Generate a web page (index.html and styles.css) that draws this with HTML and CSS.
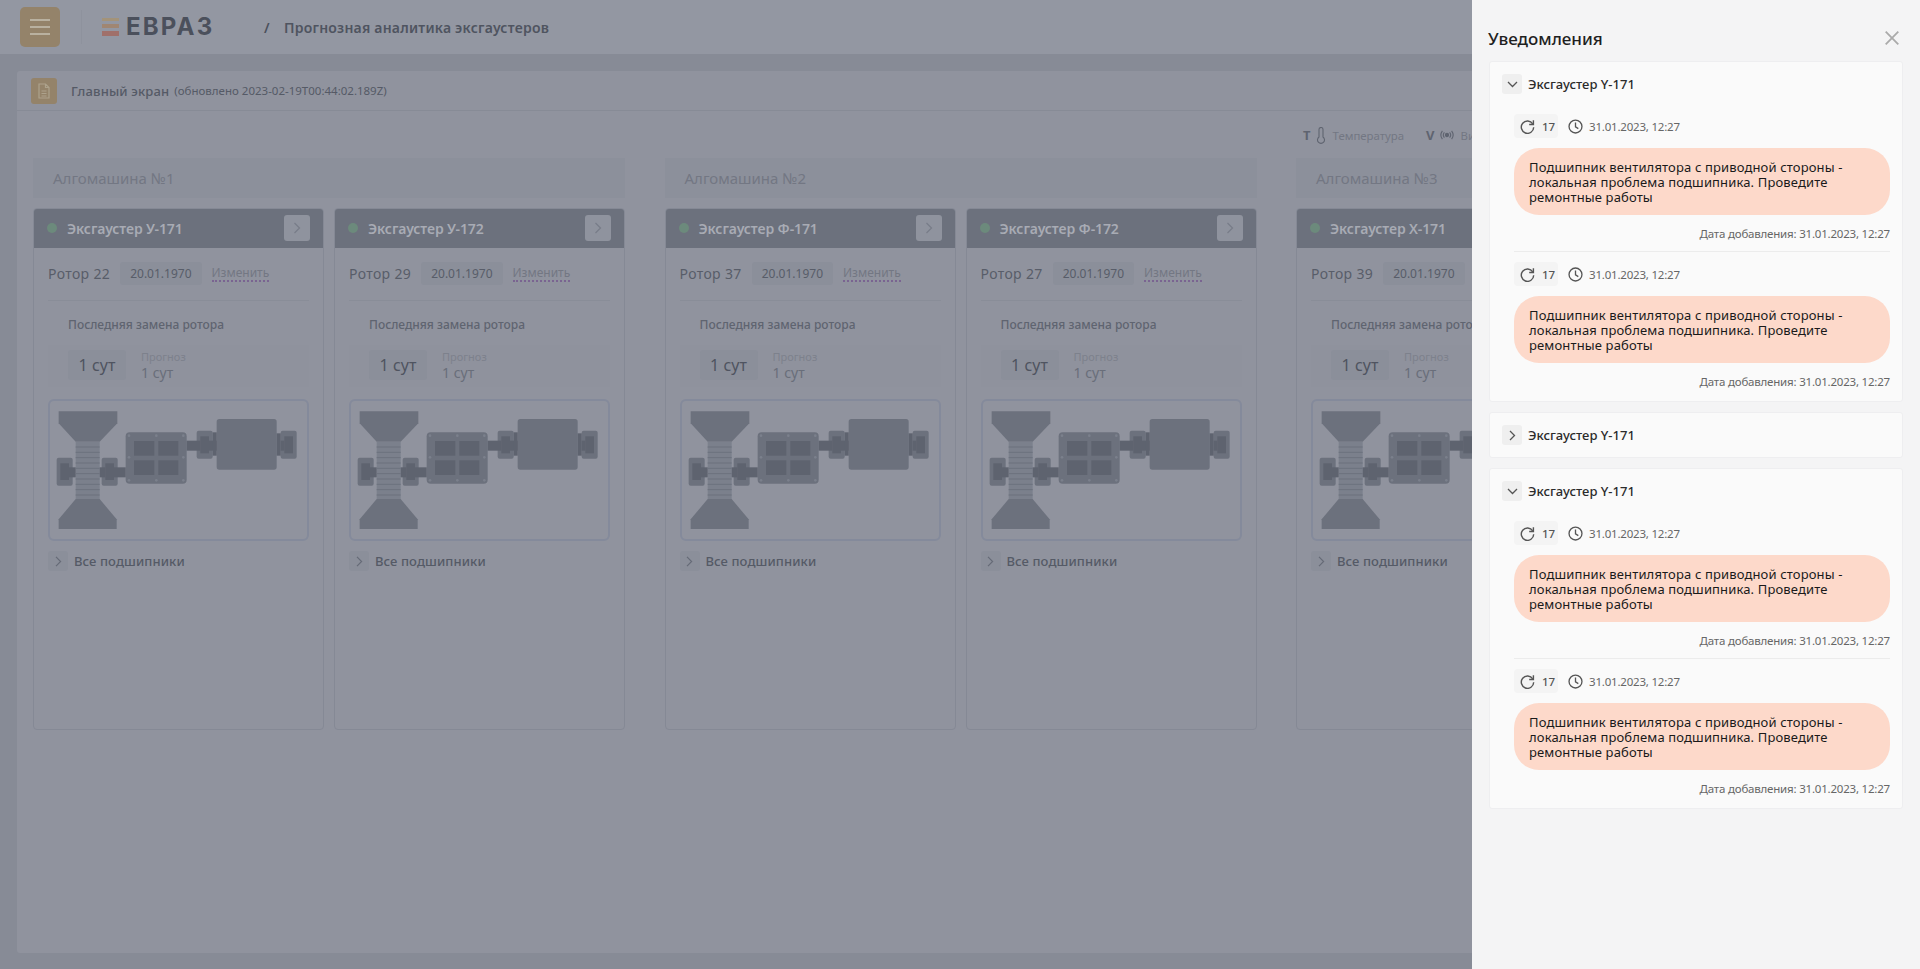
FILE: index.html
```html
<!DOCTYPE html>
<html lang="en">
<head>
    <meta charset="UTF-8">
    <title>Прогнозная аналитика эксгаустеров</title>
    <link rel="stylesheet" href="styles.css">
</head>
<body>
    <svg class="defs" width="0" height="0">
        <symbol id="scheme" viewBox="31 33 771 414">
            <g fill="#6c717d">
                <polygon points="57,64 233,64 233,100 180,155 108,155 57,100"/>
                <polygon points="108,327 180,327 231,388 231,417 57,417 57,388"/>
                <rect x="108" y="155" width="72" height="172" fill="#7b808c"/>
                <rect x="51" y="203" width="48" height="84" rx="6"/>
                <rect x="186" y="203" width="48" height="84" rx="6"/>
                <rect x="258" y="127" width="183" height="154" rx="12"/>
                <rect x="471" y="122" width="48" height="84" rx="6"/>
                <rect x="723" y="122" width="48" height="84" rx="6"/>
                <rect x="531" y="87" width="180" height="152" rx="8"/>
            </g>
            <g fill="#5e636f">
                <rect x="88" y="232" width="20" height="30"/>
                <rect x="180" y="232" width="17" height="30"/>
                <rect x="223" y="232" width="35" height="30"/>
                <rect x="441" y="152" width="41" height="30"/>
                <rect x="508" y="152" width="23" height="30"/>
                <rect x="519" y="127" width="12" height="70"/>
                <rect x="711" y="130" width="12" height="67"/>
                <rect x="723" y="152" width="11" height="30"/>
                <rect x="62" y="220" width="26" height="50"/>
                <rect x="197" y="220" width="26" height="50"/>
                <rect x="482" y="139" width="26" height="51"/>
                <rect x="734" y="139" width="26" height="51"/>
                <rect x="283" y="153" width="61" height="44"/>
                <rect x="356" y="153" width="60" height="44"/>
                <rect x="283" y="211" width="61" height="44"/>
                <rect x="356" y="211" width="60" height="44"/>
            </g>
            <g stroke="#6c717d" stroke-width="3">
                <path d="M108 171h72M108 187h72M108 203h72M108 219h72M108 235h72M108 251h72M108 267h72M108 283h72M108 299h72M108 315h72"/>
            </g>
            <g fill="#7b808c">
                <circle cx="268" cy="137" r="4"/><circle cx="350" cy="137" r="4"/><circle cx="431" cy="137" r="4"/>
                <circle cx="268" cy="202" r="4"/><circle cx="431" cy="202" r="4"/>
                <circle cx="268" cy="271" r="4"/><circle cx="350" cy="271" r="4"/><circle cx="431" cy="271" r="4"/>
            </g>
        </symbol>
        <symbol id="redo" viewBox="0 0 16 16">
            <path d="M13.6 5.2A6.6 6.6 0 1 0 14.6 8.8" fill="none" stroke="currentColor" stroke-width="1.5"/>
            <path d="M14.3 1.4v4.5H9.8" fill="none" stroke="currentColor" stroke-width="1.5"/>
        </symbol>
        <symbol id="clock" viewBox="0 0 16 16">
            <circle cx="8" cy="8" r="6.9" fill="none" stroke="currentColor" stroke-width="1.4"/>
            <path d="M8 3.8V8.4L11 10.2" fill="none" stroke="currentColor" stroke-width="1.4"/>
        </symbol>
    </svg>

    <header class="topbar">
        <button class="menu-btn"><span></span><span></span><span></span></button>
        <div class="topbar-sep"></div>
        <div class="logo">
            <div class="logo-mark"><i></i><i></i><i></i></div>
            <span class="logo-text">ЕВРАЗ</span>
        </div>
        <span class="crumb-slash">/</span>
        <span class="crumb">Прогнозная аналитика эксгаустеров</span>
    </header>

    <main class="main">
        <section class="board">
            <div class="board-head">
                <div class="board-icon">
                    <svg width="14" height="16" viewBox="0 0 14 16" fill="none" stroke="#ada28c" stroke-width="1.2"><path d="M2 1h6.5L12 4.5V15H2zM8.5 1v3.5H12M4.5 8h5M4.5 10.5h5M4.5 13h5"/></svg>
                </div>
                <span class="board-title">Главный экран</span>
                <span class="board-note">(обновлено 2023-02-19T00:44:02.189Z)</span>
            </div>

            <div class="legend">
                <div class="legend-item">
                    <b>T</b>
                    <svg width="10" height="17" viewBox="0 0 10 17" fill="none" stroke="#5f6470" stroke-width="1.1"><path d="M3 10V2.5a2 2 0 0 1 4 0V10a3.5 3.5 0 1 1-4 0z"/></svg>
                    <span>Температура</span>
                </div>
                <div class="legend-item">
                    <b>V</b>
                    <svg width="14" height="12" viewBox="0 0 14 12" fill="none" stroke="#5f6470" stroke-width="1.1"><circle cx="7" cy="6" r="1.6" fill="#5f6470"/><path d="M4.4 3.4a4 4 0 0 0 0 5.2M9.6 3.4a4 4 0 0 1 0 5.2M2.4 1.8a7 7 0 0 0 0 8.4M11.6 1.8a7 7 0 0 1 0 8.4"/></svg>
                    <span>Вибрация</span>
                </div>
            </div>

            <div class="groups">
                <div class="group">
                    <div class="group-title">Алгомашина №1</div>
                    <div class="group-cards">
                        <article class="unit">
                            <div class="unit-head"><i class="dot"></i><span class="unit-name">Эксгаустер У-171</span><button class="unit-btn"><svg width="8" height="12" viewBox="0 0 8 12" fill="none" stroke="#787c88" stroke-width="1.2"><path d="M1.5 1l5 5-5 5"/></svg></button></div>
                            <div class="unit-body">
                                <div class="rotor"><span class="rotor-name">Ротор 22</span><span class="rotor-date">20.01.1970</span><span class="rotor-edit">Изменить</span></div>
                                <div class="last-title">Последняя замена ротора</div>
                                <div class="last-row"><span class="last-value">1 сут</span><div class="forecast"><small>Прогноз</small><span>1 сут</span></div></div>
                                <div class="scheme"><svg><use href="#scheme"/></svg></div>
                                <div class="bearings"><button class="small-btn"><svg width="7" height="11" viewBox="0 0 7 11" fill="none" stroke="#666b77" stroke-width="1.2"><path d="M1 .8l4.6 4.7L1 10.2"/></svg></button><span>Все подшипники</span></div>
                            </div>
                        </article>
                        <article class="unit">
                            <div class="unit-head"><i class="dot"></i><span class="unit-name">Эксгаустер У-172</span><button class="unit-btn"><svg width="8" height="12" viewBox="0 0 8 12" fill="none" stroke="#787c88" stroke-width="1.2"><path d="M1.5 1l5 5-5 5"/></svg></button></div>
                            <div class="unit-body">
                                <div class="rotor"><span class="rotor-name">Ротор 29</span><span class="rotor-date">20.01.1970</span><span class="rotor-edit">Изменить</span></div>
                                <div class="last-title">Последняя замена ротора</div>
                                <div class="last-row"><span class="last-value">1 сут</span><div class="forecast"><small>Прогноз</small><span>1 сут</span></div></div>
                                <div class="scheme"><svg><use href="#scheme"/></svg></div>
                                <div class="bearings"><button class="small-btn"><svg width="7" height="11" viewBox="0 0 7 11" fill="none" stroke="#666b77" stroke-width="1.2"><path d="M1 .8l4.6 4.7L1 10.2"/></svg></button><span>Все подшипники</span></div>
                            </div>
                        </article>
                    </div>
                </div>

                <div class="group">
                    <div class="group-title">Алгомашина №2</div>
                    <div class="group-cards">
                        <article class="unit">
                            <div class="unit-head"><i class="dot"></i><span class="unit-name">Эксгаустер Ф-171</span><button class="unit-btn"><svg width="8" height="12" viewBox="0 0 8 12" fill="none" stroke="#787c88" stroke-width="1.2"><path d="M1.5 1l5 5-5 5"/></svg></button></div>
                            <div class="unit-body">
                                <div class="rotor"><span class="rotor-name">Ротор 37</span><span class="rotor-date">20.01.1970</span><span class="rotor-edit">Изменить</span></div>
                                <div class="last-title">Последняя замена ротора</div>
                                <div class="last-row"><span class="last-value">1 сут</span><div class="forecast"><small>Прогноз</small><span>1 сут</span></div></div>
                                <div class="scheme"><svg><use href="#scheme"/></svg></div>
                                <div class="bearings"><button class="small-btn"><svg width="7" height="11" viewBox="0 0 7 11" fill="none" stroke="#666b77" stroke-width="1.2"><path d="M1 .8l4.6 4.7L1 10.2"/></svg></button><span>Все подшипники</span></div>
                            </div>
                        </article>
                        <article class="unit">
                            <div class="unit-head"><i class="dot"></i><span class="unit-name">Эксгаустер Ф-172</span><button class="unit-btn"><svg width="8" height="12" viewBox="0 0 8 12" fill="none" stroke="#787c88" stroke-width="1.2"><path d="M1.5 1l5 5-5 5"/></svg></button></div>
                            <div class="unit-body">
                                <div class="rotor"><span class="rotor-name">Ротор 27</span><span class="rotor-date">20.01.1970</span><span class="rotor-edit">Изменить</span></div>
                                <div class="last-title">Последняя замена ротора</div>
                                <div class="last-row"><span class="last-value">1 сут</span><div class="forecast"><small>Прогноз</small><span>1 сут</span></div></div>
                                <div class="scheme"><svg><use href="#scheme"/></svg></div>
                                <div class="bearings"><button class="small-btn"><svg width="7" height="11" viewBox="0 0 7 11" fill="none" stroke="#666b77" stroke-width="1.2"><path d="M1 .8l4.6 4.7L1 10.2"/></svg></button><span>Все подшипники</span></div>
                            </div>
                        </article>
                    </div>
                </div>

                <div class="group">
                    <div class="group-title">Алгомашина №3</div>
                    <div class="group-cards">
                        <article class="unit">
                            <div class="unit-head"><i class="dot"></i><span class="unit-name">Эксгаустер Х-171</span><button class="unit-btn"><svg width="8" height="12" viewBox="0 0 8 12" fill="none" stroke="#787c88" stroke-width="1.2"><path d="M1.5 1l5 5-5 5"/></svg></button></div>
                            <div class="unit-body">
                                <div class="rotor"><span class="rotor-name">Ротор 39</span><span class="rotor-date">20.01.1970</span><span class="rotor-edit">Изменить</span></div>
                                <div class="last-title">Последняя замена ротора</div>
                                <div class="last-row"><span class="last-value">1 сут</span><div class="forecast"><small>Прогноз</small><span>1 сут</span></div></div>
                                <div class="scheme"><svg><use href="#scheme"/></svg></div>
                                <div class="bearings"><button class="small-btn"><svg width="7" height="11" viewBox="0 0 7 11" fill="none" stroke="#666b77" stroke-width="1.2"><path d="M1 .8l4.6 4.7L1 10.2"/></svg></button><span>Все подшипники</span></div>
                            </div>
                        </article>
                    </div>
                </div>
            </div>
        </section>
    </main>

    <aside class="panel">
        <div class="panel-head">
            <h2>Уведомления</h2>
            <svg class="panel-close" width="14" height="14" viewBox="0 0 14 14" stroke="#aaaaaa" stroke-width="1.8"><path d="M.7.7l12.6 12.6M13.3.7L.7 13.3"/></svg>
        </div>

        <div class="notes">
            <section class="note-group">
                <div class="note-head">
                    <span class="toggle"><svg width="11" height="7" viewBox="0 0 11 7" fill="none" stroke="#555" stroke-width="1.3"><path d="M1 1l4.5 4.5L10 1"/></svg></span>
                    <span class="note-name">Эксгаустер Y-171</span>
                </div>
                <div class="note">
                    <div class="note-meta">
                        <span class="count"><svg><use href="#redo"/></svg>17</span>
                        <svg class="clock"><use href="#clock"/></svg>
                        <span>31.01.2023, 12:27</span>
                    </div>
                    <p class="note-text">Подшипник вентилятора с приводной стороны - локальная проблема подшипника. Проведите ремонтные работы</p>
                    <div class="note-date">Дата добавления: 31.01.2023, 12:27</div>
                </div>
                <div class="note">
                    <div class="note-meta">
                        <span class="count"><svg><use href="#redo"/></svg>17</span>
                        <svg class="clock"><use href="#clock"/></svg>
                        <span>31.01.2023, 12:27</span>
                    </div>
                    <p class="note-text">Подшипник вентилятора с приводной стороны - локальная проблема подшипника. Проведите ремонтные работы</p>
                    <div class="note-date">Дата добавления: 31.01.2023, 12:27</div>
                </div>
            </section>

            <section class="note-group">
                <div class="note-head">
                    <span class="toggle"><svg width="7" height="11" viewBox="0 0 7 11" fill="none" stroke="#555" stroke-width="1.3"><path d="M1 1l4.5 4.5L1 10"/></svg></span>
                    <span class="note-name">Эксгаустер Y-171</span>
                </div>
            </section>

            <section class="note-group">
                <div class="note-head">
                    <span class="toggle"><svg width="11" height="7" viewBox="0 0 11 7" fill="none" stroke="#555" stroke-width="1.3"><path d="M1 1l4.5 4.5L10 1"/></svg></span>
                    <span class="note-name">Эксгаустер Y-171</span>
                </div>
                <div class="note">
                    <div class="note-meta">
                        <span class="count"><svg><use href="#redo"/></svg>17</span>
                        <svg class="clock"><use href="#clock"/></svg>
                        <span>31.01.2023, 12:27</span>
                    </div>
                    <p class="note-text">Подшипник вентилятора с приводной стороны - локальная проблема подшипника. Проведите ремонтные работы</p>
                    <div class="note-date">Дата добавления: 31.01.2023, 12:27</div>
                </div>
                <div class="note">
                    <div class="note-meta">
                        <span class="count"><svg><use href="#redo"/></svg>17</span>
                        <svg class="clock"><use href="#clock"/></svg>
                        <span>31.01.2023, 12:27</span>
                    </div>
                    <p class="note-text">Подшипник вентилятора с приводной стороны - локальная проблема подшипника. Проведите ремонтные работы</p>
                    <div class="note-date">Дата добавления: 31.01.2023, 12:27</div>
                </div>
            </section>
        </div>
    </aside>
</body>
</html>
```

FILE: styles.css
```css
* {
    box-sizing: border-box;
}

html, body {
    height: 100%;
}

body {
    margin: 0;
    overflow: hidden;
    background-color: #878b96;
    color: #555a66;
    font-family: "Noto Sans", "Open Sans", sans-serif;
}

button {
    border: none;
    padding: 0;
    display: flex;
    align-items: center;
    justify-content: center;
}

.defs {
    position: absolute;
}

/* top bar */
.topbar {
    height: 54px;
    padding-left: 20px;
    display: flex;
    align-items: center;
    background-color: #9397a2;
}

.menu-btn {
    width: 40px;
    height: 40px;
    flex-direction: column;
    gap: 5px;
    background-color: #94836a;
    border-radius: 5px;
}

.menu-btn span {
    width: 20px;
    height: 2px;
    background-color: #b9b1a0;
}

.topbar-sep {
    width: 1px;
    height: 34px;
    margin: 0 20px 0 21px;
    background-color: #8e929d;
}

.logo {
    display: flex;
    align-items: center;
    width: 162px;
}

.logo-mark {
    width: 17px;
    height: 18px;
    display: flex;
    flex-direction: column;
    justify-content: space-between;
}

.logo-mark i {
    display: block;
    height: 4px;
}

.logo-mark i:nth-child(1) {
    height: 3px;
    background-color: #a3937a;
}

.logo-mark i:nth-child(2) {
    background-color: #a08672;
}

.logo-mark i:nth-child(3) {
    height: 5px;
    background-color: #a0706a;
}

.logo-text {
    margin-left: 7px;
    font-family: Inter, "Noto Sans", sans-serif;
    font-size: 24px;
    line-height: 24px;
    font-weight: 700;
    letter-spacing: 2.2px;
    color: #4b505c;
}

.crumb-slash {
    width: 20px;
    font-size: 14px;
    font-weight: 600;
    color: #4b505c;
}

.crumb {
    font-size: 14px;
    font-weight: 600;
    letter-spacing: .22px;
    color: #4f5460;
}

/* main board */
.main {
    padding: 17px 0 0 17px;
}

.board {
    width: 1886px;
    height: 882px;
    background-color: #90939e;
    border-radius: 3px;
}

.board-head {
    height: 40px;
    padding-left: 14px;
    display: flex;
    align-items: center;
    border-bottom: 1px solid #878b96;
}

.board-icon {
    width: 26px;
    height: 26px;
    margin-right: 14px;
    display: flex;
    align-items: center;
    justify-content: center;
    background-color: #94836a;
    border-radius: 3px;
}

.board-title {
    font-size: 13px;
    font-weight: 500;
    letter-spacing: .15px;
    color: #555a66;
}

.board-note {
    margin-left: 5px;
    font-size: 11.5px;
    color: #555a66;
}

.legend {
    height: 16px;
    margin-top: 16px;
    padding-left: 1286px;
    display: flex;
    gap: 22px;
    font-size: 11.4px;
    color: #737783;
}

.legend-item {
    display: flex;
    align-items: center;
    gap: 5px;
}

.legend-item b {
    font-size: 13px;
    color: #5f6470;
}

.legend-item span {
    margin-left: 2px;
}

.groups {
    margin-top: 15px;
    padding-left: 16px;
    display: flex;
    gap: 39.5px;
}

.group {
    width: 592px;
    flex-shrink: 0;
}

.group-title {
    height: 40px;
    padding-left: 20px;
    display: flex;
    align-items: center;
    background-color: #8c909b;
    font-size: 15px;
    color: #737783;
}

.group-cards {
    margin-top: 10px;
    display: flex;
    gap: 10px;
}

.unit {
    width: 291px;
    height: 522px;
    border: 1px solid #858995;
    border-radius: 4px;
    overflow: hidden;
}

.unit-head {
    height: 40px;
    margin: -1px -1px 0;
    padding: 0 14px 0 14px;
    display: flex;
    align-items: center;
    background-color: #6c717d;
}

.dot {
    width: 10px;
    height: 10px;
    margin-right: 10px;
    border-radius: 50%;
    background-color: #6c8a7c;
}

.unit-name {
    flex: 1;
    font-size: 14px;
    font-weight: 600;
    letter-spacing: -.1px;
    color: #a8abb4;
}

.unit-btn {
    width: 26px;
    height: 26px;
    background-color: #8f939e;
    border-radius: 3px;
}

.unit-body {
    padding: 14px 14px 0;
}

.rotor {
    height: 39px;
    padding-bottom: 15px;
    display: flex;
    align-items: center;
    gap: 10px;
    border-bottom: 1px solid #898d98;
}

.rotor-name {
    font-size: 14px;
    letter-spacing: .35px;
    color: #585d69;
}

.rotor-date {
    padding: 0 10px;
    height: 23px;
    line-height: 23px;
    background-color: #8b8f9a;
    border-radius: 3px;
    font-size: 12px;
    color: #585d69;
}

.rotor-edit {
    font-size: 12px;
    line-height: 15px;
    color: #737783;
    border-bottom: 2px dotted #7a6491;
}

.last-title {
    margin-top: 16px;
    padding-left: 20px;
    height: 16px;
    line-height: 16px;
    font-size: 12px;
    font-weight: 500;
    color: #5f6470;
}

.last-row {
    height: 42px;
    margin-top: 12px;
    padding: 5px 0 0 20px;
    display: flex;
    gap: 15px;
    background-color: #8f929d;
}

.last-value {
    width: 58px;
    height: 30px;
    line-height: 30px;
    text-align: center;
    background-color: #8b8f9a;
    border-radius: 3px;
    font-size: 16px;
    color: #4f5460;
}

.forecast {
    display: flex;
    flex-direction: column;
    font-size: 14px;
    line-height: 18px;
    color: #696e7a;
}

.forecast small {
    font-size: 11px;
    line-height: 14px;
    color: #7d818c;
}

.scheme {
    height: 142px;
    margin-top: 12px;
    border: 2px solid #848a9b;
    border-radius: 6px;
}

.scheme svg {
    display: block;
    width: 100%;
    height: 100%;
}

.bearings {
    margin-top: 10px;
    display: flex;
    align-items: center;
    gap: 6px;
    font-size: 13px;
    font-weight: 500;
    letter-spacing: .1px;
    color: #555a66;
}

.small-btn {
    width: 20px;
    height: 20px;
    background-color: #8b8f9a;
    border-radius: 3px;
}

/* notifications panel */
.panel {
    position: fixed;
    top: 0;
    right: 0;
    bottom: 0;
    width: 448px;
    padding: 27px 17px 0;
    background-color: #f4f4f5;
    color: #222;
}

.panel-head {
    height: 24px;
    margin: 0 4px 10px -1px;
    display: flex;
    align-items: center;
    justify-content: space-between;
}

.panel-head h2 {
    margin: 0;
    font-size: 17px;
    line-height: 24px;
    font-weight: 500;
    color: #1f1f1f;
}

.panel-close {
    margin-top: -2px;
}

.notes {
    display: flex;
    flex-direction: column;
    gap: 10px;
}

.note-group {
    padding: 12px;
    background-color: #fafafa;
    border: 1px solid #eeeef0;
    border-radius: 3px;
}

.note-head {
    height: 20px;
    display: flex;
    align-items: center;
    gap: 6px;
}

.toggle {
    width: 20px;
    height: 20px;
    display: flex;
    align-items: center;
    justify-content: center;
    background-color: #efefef;
    border-radius: 3px;
}

.note-name {
    font-size: 13px;
    font-weight: 500;
    color: #2b2b2b;
}

.note {
    margin-left: 12px;
    padding-top: 10px;
    padding-bottom: 10px;
    border-bottom: 1px solid #ececec;
}

.note-head + .note {
    margin-top: 10px;
}

.note:last-child {
    padding-bottom: 0;
    border-bottom: none;
}

.note-meta {
    height: 24px;
    display: flex;
    align-items: center;
    font-size: 11.5px;
    letter-spacing: -.2px;
    color: #666;
}

.count {
    width: 44px;
    height: 24px;
    padding-left: 6px;
    margin-right: 10px;
    display: flex;
    align-items: center;
    gap: 7px;
    background-color: #f4f4f4;
    border-radius: 4px;
    color: #555;
    font-weight: 500;
}

.count svg, .clock {
    width: 15px;
    height: 15px;
    color: #555;
}

.clock {
    margin-right: 6px;
}

.note-text {
    margin: 10px 0 0;
    padding: 12px 15px 10px;
    height: 67px;
    background-color: #fdd9ca;
    border-radius: 25px;
    font-size: 13px;
    line-height: 15px;
    letter-spacing: .14px;
    color: #1a1a1a;
}

.note-date {
    margin-top: 11px;
    height: 15px;
    line-height: 15px;
    text-align: right;
    font-size: 11.5px;
    letter-spacing: -.2px;
    color: #666;
}
```
